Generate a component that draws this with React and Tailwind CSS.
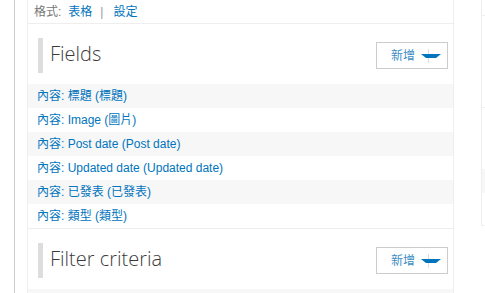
import React from 'react';

const rows = [
  '內容: 標題 (標題)',
  '內容: Image (圖片)',
  '內容: Post date (Post date)',
  '內容: Updated date (Updated date)',
  '內容: 已發表 (已發表)',
  '內容: 類型 (類型)',
];

const cjk = "font-['Liberation_Sans','Noto_Sans_CJK_TC',sans-serif]";

function AddButton() {
  return (
    <div className="w-[72px] h-[27px] border border-[#cccccc] bg-white flex items-center justify-end pr-[6px]">
      <span className="text-[12px] text-[#3d8cc4] mr-[6px] leading-none">新增</span>
      <span className="relative w-[20px] h-[14px] flex items-center">
        <span className="absolute left-[7px] top-0 h-[14px] w-px bg-[#dddddd]" />
        <svg width="20" height="4" viewBox="0 0 20 4" className="relative">
          <polygon points="0,0 20,0 15,4 5,4" fill="#0074bd" />
        </svg>
      </span>
    </div>
  );
}

function SectionHeader({ title }) {
  return (
    <div className="h-[60px] pt-[14px] pl-[10px] pr-[5px] flex items-start justify-between">
      <div className="flex items-center h-[35px]">
        <div className="w-[5px] h-[35px] bg-[#dddddd]" />
        <h2 className="relative -top-[2px] ml-[7px] text-[20px] font-light text-[#3a3a3a] font-['Open_Sans_Light','Open_Sans',sans-serif] leading-none">
          {title}
        </h2>
      </div>
      <div className="pt-[4px]">
        <AddButton />
      </div>
    </div>
  );
}

export default function App() {
  return (
    <div className={`w-[485px] h-[293px] bg-white overflow-hidden flex ${cjk}`}>
      {/* left rail */}
      <div className="w-[15px] shrink-0 border-r border-[#cccccc]" />
      <div className="w-[12px] shrink-0" />

      {/* main panel */}
      <div className="w-[427px] shrink-0 border-x border-[#eeeeee] flex flex-col">
        <div className="h-[24px] border-b border-[#eeeeee] pl-[6px] flex items-center text-[12px] leading-none">
          <span className="text-[#777777]">格式:</span>
          <span className="ml-[7px] text-[#0074bd]">表格</span>
          <span className="ml-[8px] text-[#999999]">|</span>
          <span className="ml-[10px] text-[#0074bd]">設定</span>
        </div>

        <SectionHeader title="Fields" />

        <div className="border-b border-[#eeeeee]">
          {rows.map((r, i) => (
            <div
              key={i}
              className={`h-[24px] flex items-center pl-[9px] text-[12px] text-[#0074bd] ${i % 2 === 0 ? 'bg-[#f7f7f7]' : 'bg-white'}`}
            >
              {r}
            </div>
          ))}
        </div>

        <SectionHeader title="Filter criteria" />
        <div className="flex-1 bg-[#f7f7f7]" />
      </div>

      <div className="w-[27px] shrink-0" />

      {/* right column */}
      <div className="flex-1 h-[226px] border-l border-b border-[#eeeeee] flex flex-col">
        <div className="h-[16px] border-b border-[#eeeeee]" />
        <div className="h-[92px] border-b border-[#eeeeee]" />
        <div className="h-[61px]" />
        <div className="h-[24px] bg-[#f7f7f7]" />
      </div>
    </div>
  );
}
